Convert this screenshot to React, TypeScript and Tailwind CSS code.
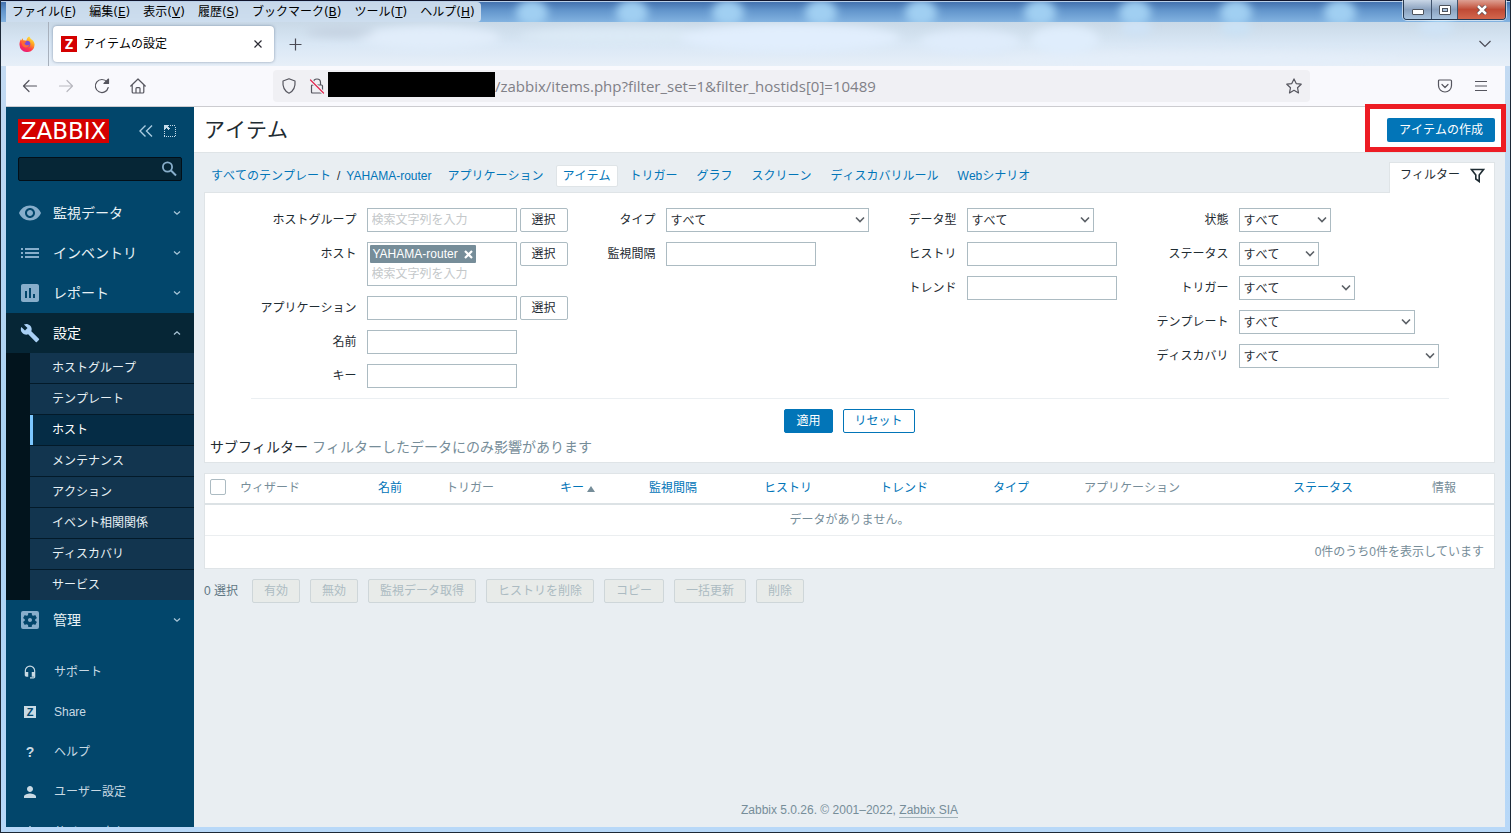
import { useState } from "react";
import type { ReactNode } from "react";
import { twMerge } from "tailwind-merge";
import {
  MdAssessment,
  MdBuild,
  MdHeadsetMic,
  MdPerson,
  MdPowerSettingsNew,
  MdSettingsApplications,
  MdVisibility,
} from "react-icons/md";

const browserMenus = [
  ["ファイル", "F"],
  ["編集", "E"],
  ["表示", "V"],
  ["履歴", "S"],
  ["ブックマーク", "B"],
  ["ツール", "T"],
  ["ヘルプ", "H"],
];

const submenu = [
  "ホストグループ",
  "テンプレート",
  "ホスト",
  "メンテナンス",
  "アクション",
  "イベント相関関係",
  "ディスカバリ",
  "サービス",
];

const hostTabs = [
  "アプリケーション",
  "アイテム",
  "トリガー",
  "グラフ",
  "スクリーン",
  "ディスカバリルール",
  "Webシナリオ",
];

const columns = [
  { label: "ウィザード", width: "w-[138px]" },
  { label: "名前", width: "w-[68px]", sortable: true },
  { label: "トリガー", width: "w-[114px]" },
  { label: "キー", width: "w-[89px]", sortable: true, sorted: true },
  { label: "監視間隔", width: "w-[115px]", sortable: true },
  { label: "ヒストリ", width: "w-[116px]", sortable: true },
  { label: "トレンド", width: "w-[113px]", sortable: true },
  { label: "タイプ", width: "w-[91px]", sortable: true },
  { label: "アプリケーション", width: "w-[209px]" },
  { label: "ステータス", width: "w-[139px]", sortable: true },
  { label: "情報", width: "w-[67px]" },
];

const massActions = [
  "有効",
  "無効",
  "監視データ取得",
  "ヒストリを削除",
  "コピー",
  "一括更新",
  "削除",
];

/* --------------------------------------------------------------
   Browser window
-------------------------------------------------------------- */
function GlassBackground() {
  const glows = [532, 632, 728, 821, 921, 1040, 1135, 1236, 1340, 1440];
  return (
    <svg
      className="absolute inset-0 h-full w-full"
      viewBox="0 0 1511 66"
      preserveAspectRatio="none"
      aria-hidden="true"
    >
      <defs>
        <linearGradient id="sky" x1="0" y1="0" x2="0" y2="1">
          <stop offset="0" stopColor="#3d6aa8" />
          <stop offset="0.5" stopColor="#6497cd" />
          <stop offset="1" stopColor="#82b2e0" />
        </linearGradient>
        <linearGradient id="haze" x1="0" y1="0" x2="0" y2="1">
          <stop offset="0" stopColor="#c9d9e7" />
          <stop offset="0.5" stopColor="#d9e7f5" />
          <stop offset="1" stopColor="#e7eff8" />
        </linearGradient>
        <filter id="soft" x="-50%" y="-50%" width="200%" height="200%">
          <feGaussianBlur stdDeviation="4" />
        </filter>
        <clipPath id="strip">
          <rect x="0" y="0" width="1511" height="22" />
        </clipPath>
        <clipPath id="tabs">
          <rect x="0" y="22" width="1511" height="44" />
        </clipPath>
      </defs>
      <rect width="1511" height="22" fill="url(#sky)" />
      <g clipPath="url(#strip)">
        <g filter="url(#soft)">
          {glows.map((x) => (
            <ellipse key={x} cx={x} cy="13" rx="16" ry="13" fill="#a0cff2" />
          ))}
        </g>
      </g>
      <rect y="22" width="1511" height="44" fill="url(#haze)" />
      <g clipPath="url(#tabs)">
        <g filter="url(#soft)">
          <ellipse cx="430" cy="38" rx="70" ry="12" fill="#e1edfa" />
          <ellipse cx="620" cy="36" rx="100" ry="8" fill="#dceaf6" />
          <ellipse cx="790" cy="38" rx="110" ry="14" fill="#e1eefd" />
          <ellipse cx="970" cy="42" rx="50" ry="12" fill="#dfecfb" />
          <ellipse cx="1065" cy="40" rx="34" ry="14" fill="#dfedfc" />
          <ellipse cx="1136" cy="28" rx="16" ry="8" fill="#cfe3f6" />
          <ellipse cx="1236" cy="28" rx="16" ry="8" fill="#cbe2f5" />
          <ellipse cx="1436" cy="28" rx="18" ry="8" fill="#cfe3f6" />
          <ellipse cx="340" cy="32" rx="34" ry="5" fill="#c5d2e1" />
          <ellipse cx="1200" cy="60" rx="200" ry="7" fill="#e4eef9" />
        </g>
      </g>
      <rect width="1511" height="1" fill="#10142c" />
      <rect y="1" width="1511" height="1" fill="#b9cfe8" />
      <path d="M.5 0v66M1510.500 0v66" stroke="#1c2836" />
    </svg>
  );
}

function FirefoxIcon() {
  return (
    <svg className="size-4" viewBox="0 0 16 16" aria-hidden="true">
      <defs>
        <linearGradient id="fox" x1="0.8" y1="0" x2="0.2" y2="1">
          <stop offset="0" stopColor="#fff24a" />
          <stop offset="0.35" stopColor="#ffa020" />
          <stop offset="0.65" stopColor="#ff3a48" />
          <stop offset="1" stopColor="#e31587" />
        </linearGradient>
      </defs>
      <path
        d="M10.2.4c1 1 1.3 1.8 1.6 2.6l1.6 1c1.400 1.300 2.200 3 2.200 4.700A7.500 7.300 0 0 1 .5 8.700C.4 6.800 1.100 4.500 1.900 3.200l.5 1.200c.4-1 .9-1.700 1.500-2.100l.2 1.900 3.400.2c.2-1.900 1.200-3.400 2.700-4z"
        fill="url(#fox)"
      />
      <circle cx="8" cy="8" r="3.300" fill="#7a4bd8" />
      <path
        d="M2.500 5.400c1.400-1 3.300-.8 4.900.2-.1 1-1.600 1.100-1.900 2 .8 2.200 3.500 2.300 5.200.6-.3 3-4.200 4.200-6.400 2.200C3 9.300 2.400 7.300 2.500 5.400z"
        fill="#ff6a34"
      />
    </svg>
  );
}

function TitleBar() {
  return (
    <div className="relative flex h-[22px] items-start justify-between">
      <nav className="ml-1.5 mt-0.5 flex h-5 items-center gap-[13px] rounded-r bg-[#d5e2ef]/90 px-1.5 font-['DejaVu_Sans','Noto_Sans_CJK_JP',sans-serif] leading-5 text-black">
        {browserMenus.map(([label, key]) => (
          <button key={key} type="button" className="whitespace-nowrap">
            {label}(<u className="underline-offset-1">{key}</u>)
          </button>
        ))}
      </nav>
      <div className="mr-[5px] flex h-5 overflow-hidden rounded-b border border-t-0 border-[#27384e] shadow-[0_0_0_1px_rgba(255,255,255,0.6)]">
        <button
          type="button"
          aria-label="最小化"
          className="flex w-7 items-center justify-center border-r border-[#40536c] bg-gradient-to-b from-[#c9d6e6] via-[#8ba2bf] to-[#a9c3de] pt-1"
        >
          <span className="h-1.5 w-3 rounded-[1px] border border-[#4d535c] bg-white" />
        </button>
        <button
          type="button"
          aria-label="元に戻す"
          className="flex w-[26px] items-center justify-center border-r border-[#40536c] bg-gradient-to-b from-[#c9d6e6] via-[#8ba2bf] to-[#a9c3de]"
        >
          <span className="flex h-2.5 w-3 items-center justify-center rounded-[1px] border border-[#4d535c] bg-white">
            <span className="h-1 w-1.5 border border-[#4d535c] bg-[#a9c3de]" />
          </span>
        </button>
        <button
          type="button"
          aria-label="ウィンドウを閉じる"
          className="flex w-[47px] items-center justify-center bg-gradient-to-b from-[#dda093] via-[#bf4a35] to-[#d2664d]"
        >
          <svg className="h-2.5 w-3" viewBox="0 0 12 10" aria-hidden="true">
            <path d="M2 1l8 8M10 1l-8 8" stroke="#54444a" strokeWidth="4" />
            <path d="M2 1l8 8M10 1l-8 8" stroke="#fff" strokeWidth="2.500" />
          </svg>
        </button>
      </div>
    </div>
  );
}

function TabStrip() {
  return (
    <div className="relative flex h-11 items-center px-1.5">
      <button
        type="button"
        aria-label="Firefox View"
        className="flex h-full w-[43px] items-center justify-center border-r border-[#a7b0bc]"
      >
        <FirefoxIcon />
      </button>
      <div className="ml-1 flex h-9 w-[221px] items-center rounded bg-white px-2 shadow-[0_0_3px_rgba(60,80,110,0.55)]">
        <span className="flex size-4 items-center justify-center bg-[#d40000] font-['Open_Sans',sans-serif] text-sm font-bold leading-4 text-white">
          Z
        </span>
        <span className="ml-1.5 flex-1 text-black">アイテムの設定</span>
        <button
          type="button"
          aria-label="タブを閉じる"
          className="flex size-4 items-center justify-center text-[#2b2a33]"
        >
          <svg className="size-2" viewBox="0 0 8 8" aria-hidden="true">
            <path d="M.5.5l7 7m0-7l-7 7" stroke="currentColor" strokeWidth="1.200" />
          </svg>
        </button>
      </div>
      <button
        type="button"
        aria-label="新しいタブ"
        className="ml-[9px] flex size-6 items-center justify-center text-[#4a4a55]"
      >
        <svg className="size-[13px]" viewBox="0 0 13 13" aria-hidden="true">
          <path d="M6.500.5v12M.5 6.500h12" stroke="currentColor" strokeWidth="1.200" />
        </svg>
      </button>
      <button
        type="button"
        aria-label="タブを一覧表示"
        className="ml-auto mr-2 flex size-6 items-center justify-center text-[#4a4a55]"
      >
        <svg className="h-2 w-3" viewBox="0 0 12 8" fill="none" aria-hidden="true">
          <path d="M.5 1L6 6.500 11.500 1" stroke="currentColor" strokeWidth="1.200" />
        </svg>
      </button>
    </div>
  );
}

function ToolButton({
  label,
  className,
  children,
}: {
  label: string;
  className?: string;
  children: ReactNode;
}) {
  return (
    <button
      type="button"
      aria-label={label}
      className={twMerge(
        "flex h-8 w-9 shrink-0 items-center justify-center text-[#55555e]",
        className
      )}
    >
      <svg
        className="size-4"
        viewBox="0 0 16 16"
        fill="none"
        stroke="currentColor"
        strokeWidth="1.200"
        strokeLinecap="round"
        strokeLinejoin="round"
        aria-hidden="true"
      >
        {children}
      </svg>
    </button>
  );
}

function NavBar() {
  return (
    <div className="flex h-[41px] items-center border-b border-[#ccccd0] bg-[#f9f9fd] px-1.5">
      <ToolButton label="戻る">
        <path d="M1.500 8h13M7 2.500L1.500 8 7 13.500" />
      </ToolButton>
      <ToolButton label="進む" className="text-[#b9b9c0]">
        <path d="M1.500 8h13M9 2.500L14.500 8 9 13.500" />
      </ToolButton>
      <ToolButton label="再読み込み">
        <path d="M14.200 9.500A6.500 6.500 0 1 1 13 4" />
        <path d="M10 5.500h4.500V1z" fill="currentColor" />
      </ToolButton>
      <ToolButton label="ホーム">
        <path d="M.800 8L8 1l7.200 7M2.200 7v7c0 .7.300 1 1 1h9.600c.7 0 1-.3 1-1V7M6 15v-4.500c0-.6.300-.9.900-.9h2.200c.6 0 .9.300.9.900V15" />
      </ToolButton>

      <div className="mx-[117px] flex h-8 min-w-0 flex-1 items-center rounded bg-[#f0f0f4]">
        <ToolButton label="保護" className="ml-0.5 w-7">
          <path d="M8 .8l6 2.200c.500 5.500-1.300 10-6 12.200C3.300 13 1.500 8.500 2 3z" />
        </ToolButton>
        <ToolButton label="安全でない接続" className="w-7">
          <path d="M4.500 7V4.500a3.500 3.500 0 0 1 7 0V7M3.500 7h9c.6 0 1 .4 1 1v6c0 .6-.4 1-1 1h-9c-.6 0-1-.4-1-1V8c0-.6.400-1 1-1z" />
          <path d="M1.500 2l13 13" stroke="#f0f0f4" strokeWidth="3.500" />
          <path d="M1.500 2l13 13" stroke="#e22850" />
        </ToolButton>
        <span className="-ml-[3px] mb-[3px] h-[25px] w-[167px] shrink-0 bg-black" />
        <input
          type="text"
          aria-label="アドレス"
          readOnly
          value="/zabbix/items.php?filter_set=1&filter_hostids[0]=10489"
          className="min-w-0 flex-1 bg-transparent font-['Open_Sans',sans-serif] text-[15px] text-[#808087] outline-none"
        />
        <ToolButton label="ブックマークに追加" className="w-8">
          <path d="M8 .9l2.200 4.700 5 .6-3.700 3.500 1 5.200L8 12.300l-4.500 2.600 1-5.200L.8 6.200l5-.6z" />
        </ToolButton>
      </div>

      <ToolButton label="Pocket">
        <path d="M2.500 2h11c.6 0 1 .4 1 1v4.500a6.500 6.500 0 0 1-13 0V3c0-.6.400-1 1-1zM5 6.500l3 3 3-3" />
      </ToolButton>
      <ToolButton label="メニュー">
        <path d="M2 3.500h12M2 8h12M2 12.500h12" strokeLinecap="butt" />
      </ToolButton>
    </div>
  );
}

/* --------------------------------------------------------------
   Zabbix sidebar
-------------------------------------------------------------- */
function ListIcon() {
  return (
    <svg className="h-3.5 w-[18px]" viewBox="0 0 18 14" fill="currentColor" aria-hidden="true">
      <path d="M0 2h2v2H0zM0 6h2v2H0zM0 10h2v2H0zM4 2h14v2H4zM4 6h14v2H4zM4 10h14v2H4z" />
    </svg>
  );
}

function MainMenuItem({
  icon,
  label,
  open = false,
}: {
  icon: ReactNode;
  label: string;
  open?: boolean;
}) {
  return (
    <button
      type="button"
      aria-expanded={open}
      className={twMerge(
        "flex h-10 w-full shrink-0 items-center text-sm text-[#e8f1f5]",
        open && "bg-[#062636] text-white"
      )}
    >
      <span
        className={twMerge(
          "flex w-[47px] shrink-0 items-center justify-center text-[#87aecb]",
          open && "text-[#a9d0f5]"
        )}
      >
        {icon}
      </span>
      <span className="flex-1 text-left">{label}</span>
      <svg
        className={twMerge("mr-[13px] h-1.5 w-2", open && "rotate-180")}
        viewBox="0 0 8 6"
        fill="none"
        aria-hidden="true"
      >
        <path d="M1 1.500L4 4.200l3-2.700" stroke="#a9c6d8" strokeWidth="1.300" />
      </svg>
    </button>
  );
}

function UserMenuItem({ icon, label }: { icon: ReactNode; label: string }) {
  return (
    <a href="#" className="flex h-10 shrink-0 items-center text-[#c9dae4]">
      <span className="flex w-12 shrink-0 items-center justify-center">{icon}</span>
      {label}
    </a>
  );
}

function Sidebar() {
  const [current, setCurrent] = useState("ホスト");

  return (
    <aside className="flex w-[188px] shrink-0 flex-col overflow-hidden bg-[#02466b]">
      <div className="mt-3 flex h-6 shrink-0 items-center px-3">
        <a
          href="#"
          className="flex h-6 w-[91px] items-center justify-center bg-[#d40000] font-['DejaVu_Sans',sans-serif] text-[23px] leading-6 text-white"
        >
          ZABBIX
        </a>
        <button type="button" aria-label="サイドバーを隠す" className="ml-[30px]">
          <svg className="h-3 w-3.5" viewBox="0 0 14 12" fill="none" aria-hidden="true">
            <path d="M6.500.5L1 6l5.500 5.500M13 .5L7.500 6l5.500 5.500" stroke="#a9cbe0" strokeWidth="1.400" />
          </svg>
        </button>
        <button type="button" aria-label="キオスクモード" className="ml-2.5">
          <svg
            className="h-3 w-3.5"
            viewBox="0 0 14 12"
            fill="none"
            shapeRendering="crispEdges"
            aria-hidden="true"
          >
            <path
              d="M7 .5h6M12.500 2v10M1 11.500h12M1.500 6v6"
              stroke="#c5dcea"
              strokeDasharray="1 1"
            />
            <path d="M1 0h5v1H5v1h1v1h1v1H6v1H5V4H4V3H3v1H2v1H1z" fill="#c5dcea" />
          </svg>
        </button>
      </div>

      <form className="mx-3 mt-3.5 flex h-6 shrink-0 items-center rounded-xs border border-[#020f18] bg-[#062636]">
        <input
          type="text"
          aria-label="検索"
          className="h-full min-w-0 flex-1 bg-transparent px-1 text-white outline-none"
        />
        <button type="button" aria-label="検索する" className="mr-1">
          <svg className="size-4" viewBox="0 0 16 16" fill="none" aria-hidden="true">
            <circle cx="6.500" cy="6" r="4.600" stroke="#87aecb" strokeWidth="1.800" />
            <path d="M10 9.500l5 5" stroke="#87aecb" strokeWidth="2" />
          </svg>
        </button>
      </form>

      <nav className="mt-3 flex shrink-0 flex-col">
        <MainMenuItem icon={<MdVisibility size={24} />} label="監視データ" />
        <MainMenuItem icon={<ListIcon />} label="インベントリ" />
        <MainMenuItem icon={<MdAssessment size={24} />} label="レポート" />
        <MainMenuItem icon={<MdBuild size={20} />} label="設定" open />
        <ul className="border-l-[24px] border-[#02141d]">
          {submenu.map((label) => (
            <li key={label} className="border-b border-[#031a29] last:border-b-0">
              <a
                href="#"
                aria-current={label === current ? "page" : undefined}
                onClick={() => setCurrent(label)}
                className={twMerge(
                  "flex h-[30px] items-center border-l-[3px] border-[#12354f] bg-[#12354f] pl-[19px] text-[#e8f1f5]",
                  label === current && "border-[#7cc7ff] bg-[#052c45] text-white"
                )}
              >
                {label}
              </a>
            </li>
          ))}
        </ul>
        <MainMenuItem icon={<MdSettingsApplications size={24} />} label="管理" />
      </nav>

      <nav className="mt-3 flex shrink-0 flex-col">
        <UserMenuItem icon={<MdHeadsetMic size={14} />} label="サポート" />
        <UserMenuItem
          icon={
            <span className="flex size-3 items-center justify-center bg-[#c9dae4] text-[11px] font-bold leading-3 text-[#02466b]">
              Z
            </span>
          }
          label="Share"
        />
        <UserMenuItem icon={<span className="text-sm font-bold">?</span>} label="ヘルプ" />
        <UserMenuItem icon={<MdPerson size={18} />} label="ユーザー設定" />
        <UserMenuItem icon={<MdPowerSettingsNew size={16} />} label="サインアウト" />
      </nav>
    </aside>
  );
}

/* --------------------------------------------------------------
   Filter form
-------------------------------------------------------------- */
interface FieldProps {
  id: string;
  label: string;
  labelWidth: string;
  children: ReactNode;
}

function Field({ id, label, labelWidth, children }: FieldProps) {
  return (
    <div className="flex items-start gap-2.5">
      <label
        htmlFor={id}
        className={twMerge("shrink-0 whitespace-nowrap text-right leading-6", labelWidth)}
      >
        {label}
      </label>
      <div className="flex items-start gap-[3px]">{children}</div>
    </div>
  );
}

function TextBox({ id, placeholder }: { id: string; placeholder?: string }) {
  return (
    <input
      id={id}
      type="text"
      placeholder={placeholder}
      className="h-6 w-[150px] border border-[#acbbc2] bg-white px-1 placeholder:text-[#c4c8ca]"
    />
  );
}

function SelectBox({ id, width }: { id: string; width: string }) {
  return (
    <div className={twMerge("relative h-6", width)}>
      <select
        id={id}
        className="h-6 w-full appearance-none border border-[#acbbc2] bg-white pl-1 pr-5 pt-0.5"
      >
        <option>すべて</option>
      </select>
      <svg
        className="pointer-events-none absolute right-1 top-2 h-2 w-2.5"
        viewBox="0 0 10 8"
        fill="none"
        aria-hidden="true"
      >
        <path d="M1 1.500l4 4 4-4" stroke="#5b6066" strokeWidth="1.600" />
      </svg>
    </div>
  );
}

function PickButton() {
  return (
    <button
      type="button"
      className="h-6 w-12 rounded-xs border border-[#acbbc2] bg-white text-[#1f2c33]"
    >
      選択
    </button>
  );
}

function FilterForm() {
  return (
    <form className="border border-[#dfe4e7] bg-white px-[5px] pb-[5px] pt-[15px]">
      <div className="mx-auto flex w-full max-w-[1198px] flex-col">
        <div className="flex border-b border-[#ebeff2] pb-2.5">
          <div className="flex flex-col gap-2.5">
            <Field id="groups" label="ホストグループ" labelWidth="w-[106px]">
              <TextBox id="groups" placeholder="検索文字列を入力" />
              <PickButton />
            </Field>
            <Field id="hosts" label="ホスト" labelWidth="w-[106px]">
              <div className="flex h-11 w-[150px] flex-col items-start border border-[#acbbc2] bg-white px-0.5 pt-0.5">
                <span className="flex h-[18px] items-center gap-1.5 rounded-[1px] bg-[#768d99] px-[3px] leading-[18px] text-white [font-kerning:normal]">
                  YAHAMA-router
                  <button type="button" aria-label="YAHAMA-routerを外す">
                    <svg className="size-[9px]" viewBox="0 0 9 9" aria-hidden="true">
                      <path d="M1 1l7 7M8 1L1 8" stroke="#fff" strokeWidth="2.200" />
                    </svg>
                  </button>
                </span>
                <input
                  id="hosts"
                  type="text"
                  placeholder="検索文字列を入力"
                  className="h-[21px] w-full bg-transparent px-0.5 outline-none placeholder:text-[#c4c8ca]"
                />
              </div>
              <PickButton />
            </Field>
            <Field id="application" label="アプリケーション" labelWidth="w-[106px]">
              <TextBox id="application" />
              <PickButton />
            </Field>
            <Field id="name" label="名前" labelWidth="w-[106px]">
              <TextBox id="name" />
            </Field>
            <Field id="key" label="キー" labelWidth="w-[106px]">
              <TextBox id="key" />
            </Field>
          </div>

          <div className="flex flex-col gap-2.5">
            <Field id="type" label="タイプ" labelWidth="w-[88px]">
              <SelectBox id="type" width="w-[203px]" />
            </Field>
            <Field id="delay" label="監視間隔" labelWidth="w-[88px]">
              <TextBox id="delay" />
            </Field>
          </div>

          <div className="flex flex-col gap-2.5">
            <Field id="value-type" label="データ型" labelWidth="w-[88px]">
              <SelectBox id="value-type" width="w-[127px]" />
            </Field>
            <Field id="history" label="ヒストリ" labelWidth="w-[88px]">
              <TextBox id="history" />
            </Field>
            <Field id="trends" label="トレンド" labelWidth="w-[88px]">
              <TextBox id="trends" />
            </Field>
          </div>

          <div className="flex flex-col gap-2.5">
            <Field id="state" label="状態" labelWidth="w-[112px]">
              <SelectBox id="state" width="w-[92px]" />
            </Field>
            <Field id="status" label="ステータス" labelWidth="w-[112px]">
              <SelectBox id="status" width="w-20" />
            </Field>
            <Field id="triggers" label="トリガー" labelWidth="w-[112px]">
              <SelectBox id="triggers" width="w-[116px]" />
            </Field>
            <Field id="templated" label="テンプレート" labelWidth="w-[112px]">
              <SelectBox id="templated" width="w-44" />
            </Field>
            <Field id="discovery" label="ディスカバリ" labelWidth="w-[112px]">
              <SelectBox id="discovery" width="w-[200px]" />
            </Field>
          </div>
        </div>

        <div className="flex justify-center gap-2.5 pt-2.5">
          <button
            type="button"
            className="h-6 rounded-xs border border-[#0275b8] bg-[#0275b8] px-[11px] text-white"
          >
            適用
          </button>
          <button
            type="button"
            className="h-6 rounded-xs border border-[#0275b8] bg-white px-[11px] text-[#0275b8]"
          >
            リセット
          </button>
        </div>
      </div>

      <h3 className="mt-1 text-sm leading-5 text-[#1f2c33]">
        サブフィルター{" "}
        <span className="text-[#768d99]">フィルターしたデータにのみ影響があります</span>
      </h3>
    </form>
  );
}

/* --------------------------------------------------------------
   Item list
-------------------------------------------------------------- */
function ItemTable() {
  return (
    <table className="mt-2.5 w-full table-fixed border-separate border-spacing-0 border border-[#dfe4e7] bg-white text-[#768d99]">
      <thead>
        <tr className="h-[31px] text-left">
          <th className="w-[30px] border-b-2 border-[#dce2e5] pb-[3px] pl-[5px]">
            <input
              type="checkbox"
              aria-label="すべて選択"
              className="block size-4 appearance-none rounded-xs border border-[#acbbc2] bg-white"
            />
          </th>
          {columns.map((col) => (
            <th
              key={col.label}
              className={twMerge(
                "whitespace-nowrap border-b-2 border-[#dce2e5] pb-px pl-[5px] font-normal",
                col.width
              )}
            >
              {col.sortable ? (
                <a href="#" className="text-[#0275b8]">
                  {col.label}
                </a>
              ) : (
                col.label
              )}
              {col.sorted && (
                <svg className="ml-[3px] inline h-1.5 w-2" viewBox="0 0 8 6" aria-hidden="true">
                  <path d="M4 0l4 6H0z" fill="#768d99" />
                </svg>
              )}
            </th>
          ))}
        </tr>
      </thead>
      <tbody>
        <tr className="h-[31px]">
          <td colSpan={12} className="border-b border-[#ebeef0] text-center">
            データがありません。
          </td>
        </tr>
        <tr className="h-8">
          <td colSpan={12} className="pr-2.5 text-right">
            0件のうち0件を表示しています
          </td>
        </tr>
      </tbody>
    </table>
  );
}

function Breadcrumbs() {
  return (
    <nav className="flex items-center gap-[5px]">
      <span className="flex gap-1.5 pl-[7px] pr-1">
        <a href="#" className="text-[#0275b8]">
          すべてのテンプレート
        </a>
        <span>/</span>
        <a href="#" className="text-[#0275b8] [font-kerning:normal]">
          YAHAMA-router
        </a>
      </span>
      {hostTabs.map((tab) => (
        <a
          key={tab}
          href="#"
          className={twMerge(
            "flex h-[22px] items-center whitespace-nowrap border border-transparent px-1.5 text-[#0275b8]",
            tab === "アイテム" && "rounded-xs border-[#dfe4e7] bg-white"
          )}
        >
          {tab}
        </a>
      ))}
    </nav>
  );
}

export default function App() {
  return (
    <div className="flex h-screen flex-col overflow-hidden bg-[#b5d5f2] font-['Liberation_Sans','Noto_Sans_CJK_JP',sans-serif] text-xs text-[#1f2c33] [font-kerning:none]">
      <header className="relative shrink-0">
        <GlassBackground />
        <TitleBar />
        <TabStrip />
      </header>

      <div className="flex min-h-0 flex-1 flex-col border-x border-b border-[#1c2836] bg-gradient-to-b from-[#c3daf2] via-[#a9d2f3] to-[#b8d8f8] px-[5px] pb-[5px]">
        <NavBar />

        <div className="flex min-h-0 flex-1">
          <Sidebar />

          <main className="flex min-w-0 flex-1 flex-col bg-[#e9eef2]">
            <div className="flex h-[46px] shrink-0 items-center justify-between border-b border-[#dfe4e7] bg-white px-2.5">
              <h1 className="text-[21px] leading-7">アイテム</h1>
              <div className="relative">
                <button
                  type="button"
                  className="block h-6 rounded-xs bg-[#0275b8] px-3 text-white"
                >
                  アイテムの作成
                </button>
                <span className="pointer-events-none absolute -bottom-2.5 -left-[22px] -right-[11px] -top-3.5 border-[5px] border-[#ed1c24]" />
              </div>
            </div>

            <div className="flex min-h-0 flex-1 flex-col px-2.5 pt-2">
              <div className="flex h-[31px] shrink-0 items-end justify-between">
                <div className="flex h-full items-center pb-[5px] pt-[3px]">
                  <Breadcrumbs />
                </div>
                <button
                  type="button"
                  className="relative z-10 -mb-px flex h-[31px] items-center gap-2.5 border border-b-0 border-[#dfe4e7] bg-white pb-1.5 pl-2.5 pr-[9px]"
                >
                  フィルター
                  <svg className="size-[15px]" viewBox="0 0 15 15" fill="none" aria-hidden="true">
                    <path
                      d="M1.500 1.500h12L9.200 7v6.500L5.800 11V7z"
                      stroke="#1f2c33"
                      strokeWidth="1.600"
                    />
                  </svg>
                </button>
              </div>

              <FilterForm />
              <ItemTable />

              <div className="mt-2.5 flex items-center gap-2.5">
                <span className="mr-1 text-[#5f7683]">0 選択</span>
                {massActions.map((action) => (
                  <button
                    key={action}
                    type="button"
                    disabled
                    className="h-6 whitespace-nowrap rounded-xs border border-[#ced6d9] bg-[#e8ebe9] px-[11px] text-[#acbbc2]"
                  >
                    {action}
                  </button>
                ))}
              </div>

              <footer className="mb-[7px] mt-auto text-center leading-5 text-[#768d99]">
                Zabbix 5.0.26. © 2001–2022,{" "}
                <a href="#" className="border-b border-[#a3b3bb]">
                  Zabbix SIA
                </a>
              </footer>
            </div>
          </main>
        </div>
      </div>
    </div>
  );
}
